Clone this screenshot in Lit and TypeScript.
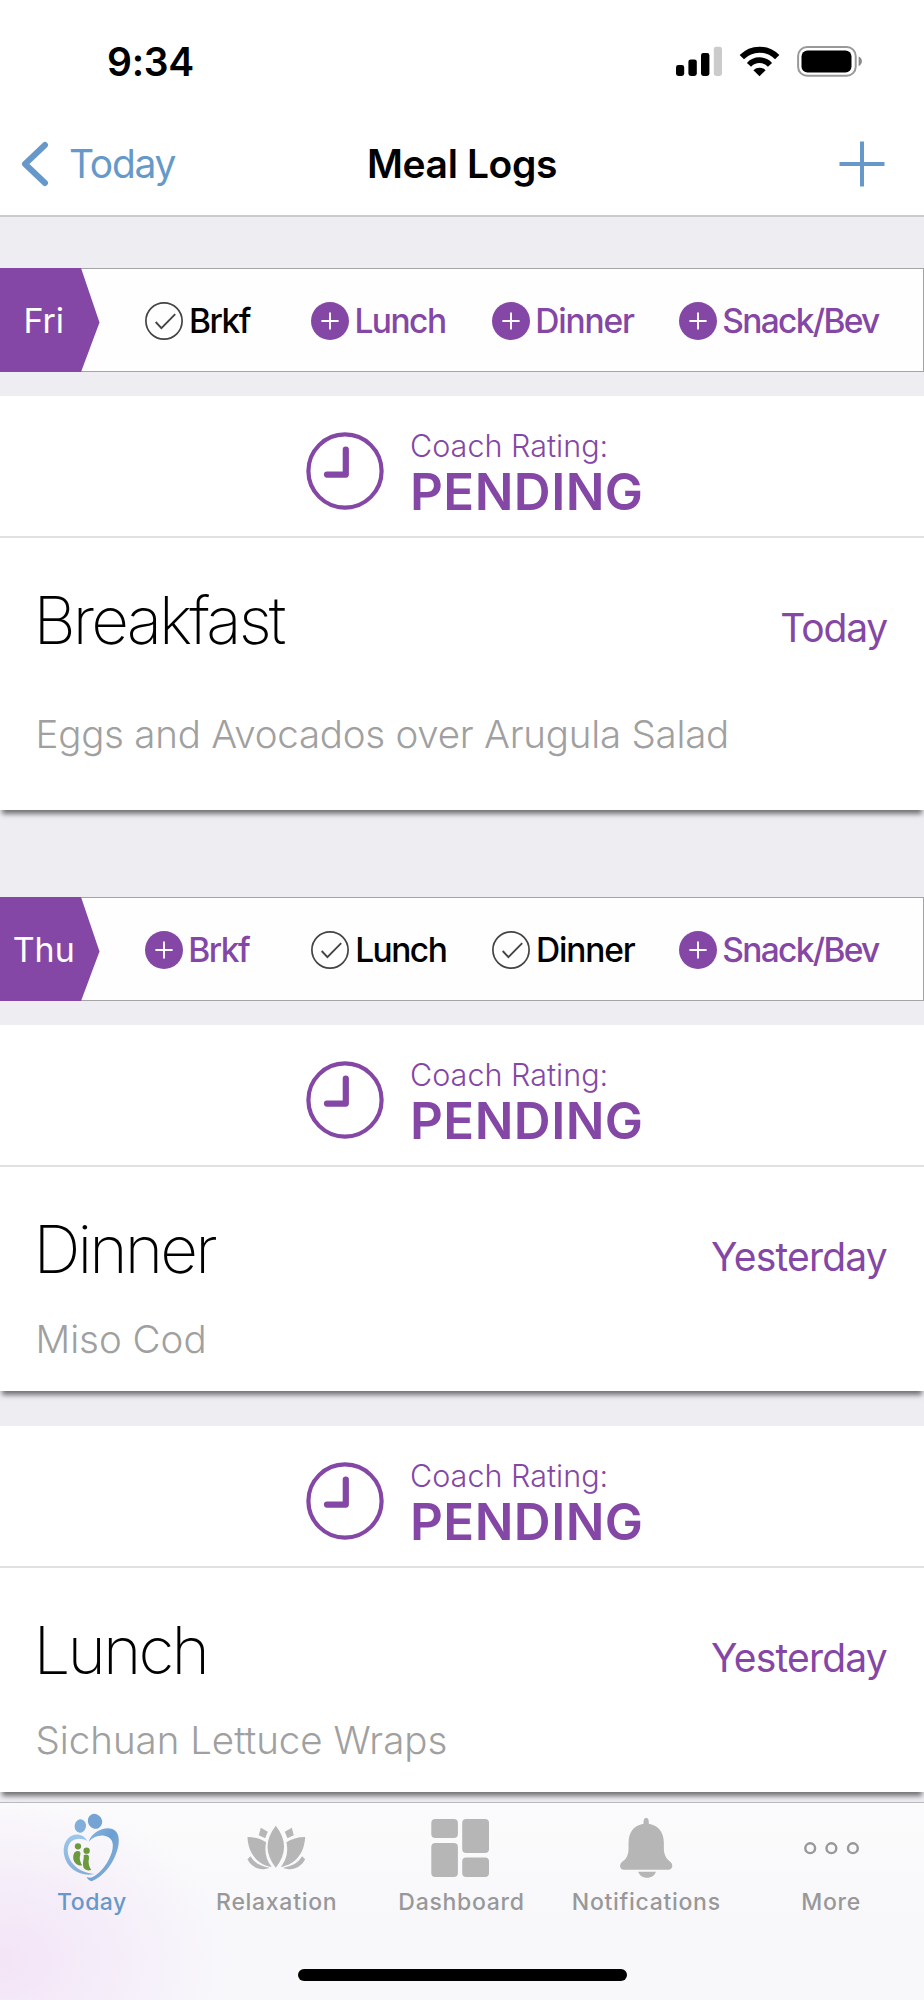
import { LitElement, html, css, svg } from "lit";
import { customElement, property } from "lit/decorators.js";
import { classMap } from "lit/directives/class-map.js";

type Slot = { label: string; kind: string; done: boolean };
type Meal = { title: string; when: string; note: string; tall?: boolean };
type Day = { name: string; slots: Slot[]; meals: Meal[] };

const slots = (done: string[]): Slot[] =>
  [
    ["Brkf", "brkf"],
    ["Lunch", "lunch"],
    ["Dinner", "dinner"],
    ["Snack/Bev", "snack"],
  ].map(([label, kind]) => ({ label, kind, done: done.includes(label) }));

const days: Day[] = [
  {
    name: "Fri",
    slots: slots(["Brkf"]),
    meals: [{ title: "Breakfast", when: "Today", note: "Eggs and Avocados over Arugula Salad", tall: true }],
  },
  {
    name: "Thu",
    slots: slots(["Lunch", "Dinner"]),
    meals: [
      { title: "Dinner", when: "Yesterday", note: "Miso Cod" },
      { title: "Lunch", when: "Yesterday", note: "Sichuan Lettuce Wraps" },
    ],
  },
];

@customElement("status-header")
class StatusHeader extends LitElement {
  static styles = css`
    :host { display: block; flex: none; background: #fff; border-bottom: 2px solid #cbcbce; }
    .status { display: flex; justify-content: space-between; align-items: center; height: 123px; padding: 0 60px 0 107px; }
    .time { font-size: 39px; font-weight: 600; letter-spacing: -0.3px; line-height: 48px; }
    .icons { display: block; width: 190px; height: 34px; }
    .nav { display: grid; grid-template-columns: 1fr auto 1fr; align-items: center; height: 82px; padding: 0 38px 10px 20px; color: #6699c9; line-height: 48px; font-size: 39px; }
    .back { display: flex; align-items: center; gap: 19px; letter-spacing: -1.3px; }
    .chev { width: 30px; height: 46px; }
    .title { color: #000; font-weight: 600; letter-spacing: -0.38px; padding-left: 18px; }
    .add { justify-self: end; width: 48px; height: 48px; }
    svg { display: block; }
  `;
  render() {
    return html`
      <div class="status">
        <span class="time">9:34</span>
        <svg class="icons" viewBox="0 0 190 34">
          <rect x="2" y="20" width="8.2" height="11" rx="2.4" />
          <rect x="14.4" y="14.4" width="8.4" height="16.6" rx="2.4" />
          <rect x="27" y="8" width="8.4" height="23" rx="2.4" />
          <rect x="39.8" y="1.8" width="8.2" height="29.2" rx="2.4" fill="#cbcbcb" />
          <g fill="none" stroke="#000">
            <path d="M67.8 12.2A24.6 24.6 0 0 1 103.2 12.2" stroke-width="6" />
            <path d="M75 19.8A14.2 14.2 0 0 1 96 19.8" stroke-width="5.6" />
          </g>
          <path d="M79.4 25.2A8.8 8.8 0 0 1 91.6 25.2L85.5 31.2Z" />
          <rect x="124.1" y="2" width="57.6" height="28.8" rx="9" fill="none" stroke="#999" stroke-width="2" />
          <rect x="127.5" y="5.4" width="50" height="22" rx="6" />
          <path d="M184.6 11.6C189 13.4 189 19.4 184.6 21.2Z" fill="#888" />
        </svg>
      </div>
      <div class="nav">
        <div class="back">
          <svg class="chev" viewBox="0 0 30 46" fill="none" stroke="#6699c9" stroke-width="6" stroke-linecap="round" stroke-linejoin="round">
            <path d="M25 4L5 23L25 42" />
          </svg>
          <span>Today</span>
        </div>
        <span class="title">Meal Logs</span>
        <svg class="add" viewBox="0 0 48 48" stroke="#6699c9" stroke-width="4"><path d="M24 1.5V46.5M1.5 24H46.5" /></svg>
      </div>
    `;
  }
}

@customElement("day-strip")
class DayStrip extends LitElement {
  @property({ attribute: false }) day!: Day;
  static styles = css`
    :host { display: grid; grid-template-columns: 99.5px 195.5px 167px 202px 230px; box-sizing: border-box; height: 104px; background: #fefefe; border: 1.5px solid #a4a4a7; border-left: 0; }
    .flag { display: flex; align-items: center; justify-content: center; box-sizing: border-box; margin: -1px 0; padding-right: 12px; background: #8447a5; color: #fff; font-size: 34px; clip-path: polygon(0 0, 81px 0, 100% 52.5%, 81px 100%, 0 100%); }
    .slot { display: flex; align-items: center; justify-content: center; gap: 5px; font-size: 33.5px; font-weight: 500; color: #8447a5; padding-top: 1px; }
    .done { color: #000; gap: 6.5px; }
    .mark { width: 38px; height: 38px; flex: none; }
    .brkf, .lunch { letter-spacing: -1.5px; }
    .dinner { letter-spacing: -1.2px; }
    .snack { letter-spacing: -1.7px; }
  `;
  render() {
    return html`
      <div class="flag">${this.day.name}</div>
      ${this.day.slots.map(
        (s) => html`<div class=${classMap({ slot: true, done: s.done, [s.kind]: true })}>
          <svg class="mark" viewBox="-19 -19 38 38" fill="none">
            ${s.done
              ? svg`<circle r="18.1" stroke="#444" stroke-width="1.7"/><path d="M-8.3 1L-2.6 7.1L11.2 -6.9" stroke="#444" stroke-width="1.9"/>`
              : svg`<circle r="19" fill="#8447a5"/><path d="M0 -8.6V8.6M-8.6 0H8.6" stroke="#fff" stroke-width="1.9"/>`}
          </svg>
          <span>${s.label}</span>
        </div>`,
      )}
    `;
  }
}

@customElement("meal-card")
class MealCard extends LitElement {
  @property({ attribute: false }) meal!: Meal;
  static styles = css`
    :host { display: block; background: #fff; box-shadow: 0 6px 5px -2px rgba(0, 0, 0, 0.52); }
    .rating { display: flex; align-items: center; gap: 26px; height: 140px; padding-left: 306px; border-bottom: 2px solid #e1e1e3; color: #8447a5; box-sizing: content-box; }
    .clock { width: 78px; height: 78px; margin-top: 10px; }
    .text { display: flex; flex-direction: column; margin-top: 11px; }
    .label { font-size: 30.5px; font-weight: 300; letter-spacing: 0.02px; line-height: 40px; }
    .state { font-size: 51px; font-weight: 600; letter-spacing: 0.45px; line-height: 52px; }
    .body { padding: 43px 37px 30px 35.5px; }
    .head { display: flex; justify-content: space-between; height: 80px; line-height: 80px; }
    .title { font-size: 65.5px; font-weight: 200; letter-spacing: -2.9px; margin-left: -2px; }
    .when { font-size: 39px; color: #8447a5; letter-spacing: -0.8px; padding-top: 7px; }
    .note { display: flex; align-items: center; height: 46px; margin-top: 26px; margin-bottom: -1px; font-size: 38.5px; font-weight: 300; letter-spacing: -0.02px; color: #a0a0a0; }
    .tall { height: 94px; letter-spacing: -0.24px; }
    .today { letter-spacing: -1.2px; }
  `;
  render() {
    const m = this.meal;
    return html`
      <div class="rating">
        <svg class="clock" viewBox="0 0 78 78" fill="none" stroke="#8447a5">
          <circle cx="39" cy="39" r="36.6" stroke-width="4.2" />
          <path d="M39.8 17.5V42.6H21" stroke-width="6.2" stroke-linecap="round" stroke-linejoin="round" />
        </svg>
        <div class="text"><span class="label">Coach Rating:</span><span class="state">PENDING</span></div>
      </div>
      <div class="body">
        <div class="head">
          <span class="title">${m.title}</span>
          <span class=${classMap({ when: true, today: m.when === "Today" })}>${m.when}</span>
        </div>
        <div class=${classMap({ note: true, tall: !!m.tall })}>${m.note}</div>
      </div>
    `;
  }
}

const family = svg`
  <defs>
    <linearGradient id="deep" x1="0" y1="0" x2="1" y2="1"><stop offset="0" stop-color="#8ab8e2"/><stop offset=".45" stop-color="#6c9fd1"/><stop offset="1" stop-color="#8bb5de"/></linearGradient>
    <linearGradient id="pale" x1="0" y1="0" x2="0" y2="1"><stop offset="0" stop-color="#9cc8ec"/><stop offset="1" stop-color="#86aed6"/></linearGradient>
  </defs>
  <g transform="translate(22.3 2) scale(.3333)">
    <ellipse cx="78" cy="63" rx="17" ry="20" transform="rotate(12 78 63)" fill="#82aedb"/>
    <ellipse cx="122" cy="49" rx="21" ry="23" transform="rotate(-30 122 49)" fill="#74a3d4"/>
    <path d="M103 110C112 82 148 64 174 72C200 82 197 120 184 150C170 184 146 214 112 229C104 227 99 221 97 216C102 218 108 219 114 217C142 202 164 170 173 140C181 112 172 96 150 92C132 90 116 96 103 110Z" fill="url(#deep)"/>
    <path d="M99 108C86 84 56 82 38 104C22 125 26 160 46 184C62 203 92 214 120 207C92 204 68 194 52 172C38 150 36 124 50 110C62 99 84 98 99 108Z" fill="url(#pale)"/>
    <g fill="#6b9a3c">
      <circle cx="71" cy="124" r="9.5"/><circle cx="97" cy="137" r="9.5"/>
      <path d="M61 142C72 134 81 140 78 150C74 160 78 172 84 181C72 184 60 176 57 162C56 153 58 147 61 142Z"/>
      <path d="M88 151C98 146 106 150 104 160C101 172 104 186 111 195C98 199 87 194 86 180C85 168 90 160 88 151Z"/>
    </g>
  </g>`;

const lotus = svg`
  <g transform="translate(22.8 12) scale(.3333)" fill="#b6b6b6">
    <path d="M108 32C141 74 141 116 108 158C75 116 75 74 108 32Z"/>
    <path d="M23 66C46 66 64 72 79 82C73 110 79 135 96 156C52 148 25 115 23 66Z"/>
    <path d="M63 38L84 50L76 70L57 61Z"/>
    <path d="M32 124C46 146 64 154 89 158C66 168 38 162 23 133Z"/>
    <g transform="translate(219 0) scale(-1 1)">
      <path d="M23 66C46 66 64 72 79 82C73 110 79 135 96 156C52 148 25 115 23 66Z"/>
      <path d="M63 38L84 50L76 70L57 61Z"/>
      <path d="M32 124C46 146 64 154 89 158C66 168 38 162 23 133Z"/>
    </g>
  </g>`;

const tiles = svg`
  <g fill="#b6b6b6">
    <rect x="29.3" y="16" width="26.6" height="19" rx="4"/><rect x="29.3" y="40" width="26.6" height="34" rx="4"/>
    <rect x="60.2" y="16" width="26.8" height="34" rx="4"/><rect x="60.2" y="54.4" width="26.8" height="19.6" rx="4"/>
  </g>`;

const bell = svg`
  <g transform="translate(23.2 7) scale(.3333)" fill="#b6b6b6">
    <path d="M108 24C114 24 116 28 116 41C145 46 161 68 161 98V116C161 138 172 148 181 156C191 166 186 179 175 179H41C29 179 26 166 35 156C46 148 55 138 55 116V98C55 68 70 46 100 41C100 28 102 24 108 24Z"/>
    <path d="M84 185H137C134 197 122 203 110.5 203C99 203 88 197 84 185Z"/>
  </g>`;

const dots = svg`
  <g fill="none" stroke="#98989a" stroke-width="2.4">
    <circle cx="38.2" cy="45.2" r="4.9"/><circle cx="59.4" cy="45.2" r="4.9"/><circle cx="80.9" cy="45.2" r="4.9"/>
  </g>`;

const tabs = [
  { label: "Today", icon: family, active: true },
  { label: "Relaxation", icon: lotus },
  { label: "Dashboard", icon: tiles },
  { label: "Notifications", icon: bell },
  { label: "More", icon: dots },
];

@customElement("tab-bar")
class TabBar extends LitElement {
  static styles = css`
    :host { display: flex; flex-direction: column; flex: none; height: 197px; border-top: 1px solid #b9b9bf; background: radial-gradient(ellipse 230px 170px at 0 158px, #f3e4f6 0%, rgba(243, 231, 248, 0.65) 45%, rgba(248, 248, 251, 0) 100%), linear-gradient(#fbfbfc, #f8f8fb 60%); }
    .tabs { display: grid; grid-template-columns: repeat(5, 1fr); }
    .tab { display: flex; flex-direction: column; align-items: center; color: #98989a; font-size: 23px; font-weight: 500; line-height: 28px; letter-spacing: 0.7px; }
    .tab span { margin-right: 1px; }
    .active { color: #6699c9; letter-spacing: 0.5px; }
    .icon { display: block; width: 120px; height: 85px; }
    .home { width: 329px; height: 12px; border-radius: 6px; background: #000; margin: 53px auto 0; }
  `;
  render() {
    return html`
      <div class="tabs">
        ${tabs.map(
          (t) => html`<div class=${classMap({ tab: true, active: !!t.active })}>
            <svg class="icon" viewBox="0 0 120 85">${t.icon}</svg>
            <span>${t.label}</span>
          </div>`,
        )}
      </div>
      <div class="home"></div>
    `;
  }
}

@customElement("app-root")
class AppRoot extends LitElement {
  static styles = css`
    :host { display: flex; flex-direction: column; width: 924px; height: 2000px; overflow: hidden; background: #eeedf2; font-family: "Inter", "Liberation Sans", sans-serif; color: #000; white-space: nowrap; }
    .feed { flex: 1; min-height: 0; overflow: hidden; padding-top: 51px; display: flex; flex-direction: column; gap: 87px; }
    .day { display: flex; flex-direction: column; gap: 24px; }
    .meals { display: flex; flex-direction: column; gap: 35px; }
  `;
  render() {
    return html`
      <status-header></status-header>
      <main class="feed">
        ${days.map(
          (d) => html`<section class="day">
            <day-strip .day=${d}></day-strip>
            <div class="meals">${d.meals.map((m) => html`<meal-card .meal=${m}></meal-card>`)}</div>
          </section>`,
        )}
      </main>
      <tab-bar></tab-bar>
    `;
  }
}
